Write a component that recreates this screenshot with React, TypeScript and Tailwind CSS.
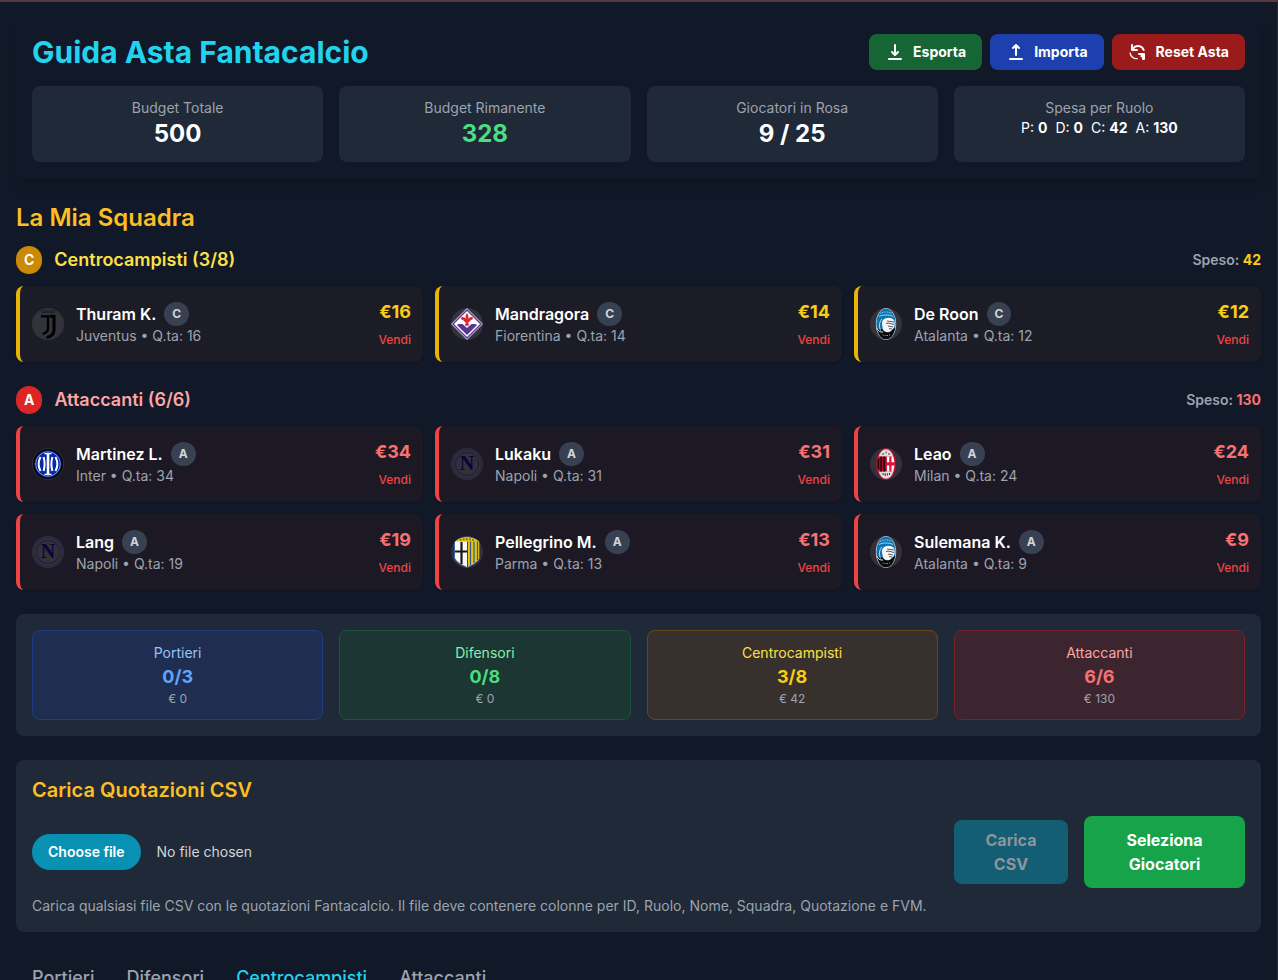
import React from "react";

type Team = "Juventus" | "Fiorentina" | "Atalanta" | "Inter" | "Napoli" | "Milan" | "Parma";
type Player = { name: string; team: Team; price: number };

const midfielders: Player[] = [
  { name: "Thuram K.", team: "Juventus", price: 16 },
  { name: "Mandragora", team: "Fiorentina", price: 14 },
  { name: "De Roon", team: "Atalanta", price: 12 },
];

const forwards: Player[] = [
  { name: "Martinez L.", team: "Inter", price: 34 },
  { name: "Lukaku", team: "Napoli", price: 31 },
  { name: "Leao", team: "Milan", price: 24 },
  { name: "Lang", team: "Napoli", price: 19 },
  { name: "Pellegrino M.", team: "Parma", price: 13 },
  { name: "Sulemana K.", team: "Atalanta", price: 9 },
];

function CrestArt({ team }: { team: Team }) {
  switch (team) {
    case "Juventus":
      return (
        <g>
          <path d="M9 2.800h2M12 2.800h1.500M14.500 2.800h2M17.500 2.800h1.500M20 2.800h3M9.500 4.200h13" stroke="#15151a" strokeWidth=".9" />
          <path d="M8.800 8.300H16v12.200c0 2.800-1.500 4.300-5.300 5.300" fill="none" stroke="#000" strokeWidth="2.300" />
          <path d="M17.500 8.300h4.500V22c0 4-2.700 6.500-7.500 7.500" fill="none" stroke="#000" strokeWidth="3" />
        </g>
      );
    case "Fiorentina":
      return (
        <g>
          <path d="M16 0 32 16 16 32 0 16Z" fill="#b9b2c6" />
          <path d="M16 1.300 30.700 16 16 30.700 1.300 16Z" fill="#5b3596" />
          <path d="M16 3 29 16 16 29 3 16Z" fill="#fff" />
          <path d="M7.500 16h4L16 20l4.500-4h4l1.500 1L16 27 6 17Z" fill="#5b3596" />
          <path d="M16 5c1.800 2.300 1.700 4.200.9 6.500.6-2.500 4.900-3.600 5-.9 0 1.400-1.500 1.700-2.100 1 0 1.700-1.200 2.300-2.500 2.400l.6 3.800h-3.800l.6-3.800c-1.300-.1-2.500-.7-2.500-2.400-.6.700-2.100.4-2.100-1 .1-2.700 4.400-1.600 5 .9-.8-2.300-.9-4.200.9-6.500Z" fill="#e12424" />
        </g>
      );
    case "Atalanta":
      return (
        <g>
          <ellipse cx="16" cy="16" rx="10.200" ry="16" fill="#b9c3c9" />
          <ellipse cx="16" cy="16" rx="9.500" ry="15.300" fill="#0874b5" />
          <path d="M7 20c4 2 14 2 18 0-1 6-4 11.300-9 11.300S8 26 7 20Z" fill="#08090b" />
          <path d="M9 8.500c4-2 10-2 14 0" fill="none" stroke="#d6e7ef" strokeWidth=".8" />
          <path d="M10 5.500c4-2 8-2 12 0" fill="none" stroke="#7fb9da" strokeWidth="1.200" strokeDasharray="1.200 .6" />
          <path d="M13 12c3-3 8-3 11 0 1.300 4 .8 7-1 9-2 1.800-3 3.500-5.500 3.200-3 .2-5-2-5-5.200-.6-3-1-5 .5-7Z" fill="#f6f6f6" />
          <path d="M12 11c-3 3-3 8-1.500 11.500" fill="none" stroke="#dbe9f0" strokeWidth=".9" />
          <path d="M7 20c1 3 3 4.500 6 4" fill="none" stroke="#e8eef0" strokeWidth="1" />
          <path d="m17 13 7 1M16 15.500c3-1 5 .5 8 1M18 18l5 1M19 20.500l3 .5" fill="none" stroke="#303136" strokeWidth=".8" />
          <path d="M12.500 27h1M14.500 27.500h1M16.500 27.500H18M19 27h1" stroke="#999" strokeWidth="1.200" />
        </g>
      );
    case "Inter":
      return (
        <g>
          <circle cx="16" cy="16" r="15.700" fill="#030408" stroke="#4a4a50" strokeWidth=".6" />
          <circle cx="16" cy="16" r="13.400" fill="#0829a6" />
          <circle cx="16" cy="16" r="12.300" fill="none" stroke="#c9d2f2" strokeWidth=".6" />
          <g fill="none" stroke="#fff">
            <path d="M16 6v20" strokeWidth="2.600" />
            <path d="M12.500 5.600h7M12.500 26.400h7" strokeWidth="1.400" />
            <path d="M11.600 9c1.300 4.500 1.300 9.500 0 14M20.400 9c-1.300 4.500-1.300 9.500 0 14" strokeWidth="2" />
            <path d="M8.500 9c-2.400 4.500-2.400 9.500 0 14M23.500 9c2.400 4.500 2.400 9.500 0 14" strokeWidth="2" />
          </g>
        </g>
      );
    case "Napoli":
      return (
        <g>
          <circle cx="16" cy="16" r="14.700" fill="none" stroke="#202049" strokeWidth=".9" />
          <circle cx="16" cy="16" r="11.700" fill="none" stroke="#17173f" strokeWidth=".9" />
          <text x="16" y="22.400" textAnchor="middle" fontFamily="Liberation Serif, serif" fontWeight="700" fontSize="20" fill="#05053b">
            N
          </text>
        </g>
      );
    case "Milan":
      return (
        <g>
          <ellipse cx="16" cy="16" rx="10" ry="16" fill="#b0102a" />
          <ellipse cx="16" cy="16" rx="8.700" ry="14.700" fill="#dcdcdc" />
          <path d="M8.500 8.500H16v15H8.500c-1.900-4-1.900-11 0-15Z" fill="#b0082a" />
          <path d="M8.300 11v10M11.200 8.500v15M14.200 8.500v15" stroke="#1a0c12" strokeWidth="1.600" />
          <path d="M16 8.500h7.500c1.900 4 1.900 11 0 15H16Z" fill="#df1234" />
          <path d="M17 8.500h2.300v5.800H17zM21.500 8.500h1.800l1 5.800h-2.800zM17 17.500h2.300v6H17zM21.500 17.500h2.800l-1 6h-1.800z" fill="#fff" />
          <path d="M12 6h2M15.200 4.500h1.600M18 6h2" stroke="#777" strokeWidth="1.400" />
          <path d="M12.500 26h1M14.500 26.500H16M17 26.500h1M19 26h1" stroke="#333" strokeWidth="2" />
        </g>
      );
    case "Parma":
      return (
        <g>
          <path d="M3 5C10-1 22-1 29 5v17c-2 5-7 7-13 10C10 29 5 27 3 22Z" fill="#3d63a8" />
          <path d="M4 5.500C11 0 21 0 28 5.500V22c-2 4-6 6-12 9C10 28 6 26 4 22Z" fill="#f8f8f6" />
          <path d="M16.500 5H28v17c-2 4-6 6-11.500 9Z" fill="#e8c70b" />
          <path d="M19.500 5v24.500M23 5v22M26.500 5v19" stroke="#3a5a94" strokeWidth="1.300" />
          <path d="M16.500 5v26" stroke="#234a95" strokeWidth="1" />
          <path d="M10.500 6v22M4 15.500h12" stroke="#171719" strokeWidth="2.200" />
          <path d="M4 5.500C11 0 21 0 28 5.500Z" fill="#e2bf11" />
          <path d="M9 3.800h1.500M12 3.300h1.500M15 3.200h1.500M18 3.300h1.500M21 3.800h1.500" stroke="#7d691c" strokeWidth="1.800" />
        </g>
      );
  }
}

function Crest({ team }: { team: Team }) {
  return (
    <span className="mr-3 block size-8 shrink-0 overflow-hidden rounded-full bg-white/10">
      <svg viewBox="0 0 32 32" className="size-8" aria-hidden="true">
        <CrestArt team={team} />
      </svg>
    </span>
  );
}

function PlayerCard({ player, role }: { player: Player; role: "C" | "A" }) {
  const mid = role === "C";
  return (
    <div
      className={`flex items-center justify-between rounded-lg border-l-4 p-3 shadow-sm ${
        mid ? "border-[#eab308] bg-[#1c1c26]" : "border-[#ef4444] bg-[#1c1924]"
      }`}
    >
      <div className="flex items-center">
        <Crest team={player.team} />
        <div>
          <div className="flex items-center">
            <span className="font-semibold text-white">{player.name}</span>
            <span className="ml-2 rounded-full bg-[#374151] px-2 py-1 text-xs font-bold text-[#d1d5db]">{role}</span>
          </div>
          <div className="text-sm text-[#9ca3af]">
            {player.team} • Q.ta: {player.price}
          </div>
        </div>
      </div>
      <div className="text-right">
        <div className={`text-lg font-bold ${mid ? "text-[#facc15]" : "text-[#f87171]"}`}>€{player.price}</div>
        <button className="text-xs font-medium text-[#ef4444]">Vendi</button>
      </div>
    </div>
  );
}

function Squad({ role, title, spent, players }: { role: "C" | "A"; title: string; spent: number; players: Player[] }) {
  const mid = role === "C";
  return (
    <section>
      <div className="mb-3 flex items-center justify-between">
        <h3 className={`flex items-center text-lg font-semibold ${mid ? "text-[#fde047]" : "text-[#fca5a5]"}`}>
          <span className={`mr-3 rounded-full px-2 py-1 text-sm font-bold text-white ${mid ? "bg-[#ca8a04]" : "bg-[#dc2626]"}`}>
            {role}
          </span>
          {title}
        </h3>
        <div className="text-sm font-semibold text-[#9ca3af]">
          Speso: <span className={`font-bold ${mid ? "text-[#facc15]" : "text-[#f87171]"}`}>{spent}</span>
        </div>
      </div>
      <div className="grid grid-cols-3 gap-3">
        {players.map((p) => (
          <PlayerCard key={p.name} player={p} role={role} />
        ))}
      </div>
    </section>
  );
}

const roleTotals = [
  { label: "Portieri", count: "0/3", spent: 0, box: "border-[#1e3d86] bg-[#1f2e50]", title: "text-[#93c5fd]", value: "text-[#60a5fa]" },
  { label: "Difensori", count: "0/8", spent: 0, box: "border-[#1b5539] bg-[#1c3634]", title: "text-[#86efac]", value: "text-[#4ade80]" },
  { label: "Centrocampisti", count: "3/8", spent: 42, box: "border-[#664718] bg-[#38302c]", title: "text-[#fde047]", value: "text-[#facc15]" },
  { label: "Attaccanti", count: "6/6", spent: 130, box: "border-[#74232b] bg-[#3c252f]", title: "text-[#fca5a5]", value: "text-[#f87171]" },
];

const actions = [
  {
    label: "Esporta",
    color: "bg-[#166534]",
    icon: (
      <path d="M3 17a1 1 0 011-1h12a1 1 0 110 2H4a1 1 0 01-1-1zm3.293-7.707a1 1 0 011.414 0L9 10.586V3a1 1 0 112 0v7.586l1.293-1.293a1 1 0 111.414 1.414l-3 3a1 1 0 01-1.414 0l-3-3a1 1 0 010-1.414z" />
    ),
  },
  {
    label: "Importa",
    color: "bg-[#1e40af]",
    icon: (
      <path d="M3 17a1 1 0 011-1h12a1 1 0 110 2H4a1 1 0 01-1-1zM6.293 6.707a1 1 0 010-1.414l3-3a1 1 0 011.414 0l3 3a1 1 0 01-1.414 1.414L11 5.414V13a1 1 0 11-2 0V5.414L7.707 6.707a1 1 0 01-1.414 0z" />
    ),
  },
  {
    label: "Reset Asta",
    color: "bg-[#991b1b]",
    icon: (
      <>
        <path d="M4 2a1 1 0 011 1v2.101a7.002 7.002 0 0111.601 2.566 1 1 0 11-1.885.666A5.002 5.002 0 005.999 7H9a1 1 0 010 2H4a1 1 0 01-1-1V3a1 1 0 011-1z" />
        <path d="M2 10.600C2.500 14.500 5.500 17.200 9.700 16.600" fill="none" stroke="currentColor" strokeWidth="1.300" />
        <path d="M11 11.100h5a1 1 0 011 1V17a1 1 0 01-1 1h-1a1 1 0 01-1-1v-1.500l-2-1.200 1.200-1.300H11a.95.95 0 010-1.900z" />
      </>
    ),
  },
];

function Stat({ label, children }: { label: string; children: React.ReactNode }) {
  return (
    <div className="rounded-lg bg-[#1f2937] p-3 text-center">
      <div className="text-sm text-[#9ca3af]">{label}</div>
      {children}
    </div>
  );
}

export default function App() {
  return (
    <div className="h-[980px] overflow-hidden border-t-2 border-r border-t-[#57393f] border-r-[#292b35] bg-[#111827] font-['Inter',sans-serif] text-[#e5e7eb]">
      <div className="p-4">
        <header className="mb-6 rounded-lg bg-[#111827] p-4 shadow-lg">
          <div className="mb-4 flex items-center justify-between">
            <h1 className="text-3xl/9 font-bold text-[#22d3ee]">Guida Asta Fantacalcio</h1>
            <div className="flex gap-2">
              {actions.map((a) => (
                <button key={a.label} className={`flex items-center rounded-lg px-4 py-2 text-sm font-bold text-white ${a.color}`}>
                  <svg viewBox="0 0 20 20" fill="currentColor" className="mr-2 size-5" aria-hidden="true">
                    {a.icon}
                  </svg>
                  {a.label}
                </button>
              ))}
            </div>
          </div>
          <div className="grid grid-cols-4 gap-4">
            <Stat label="Budget Totale">
              <div className="text-2xl font-bold text-white">500</div>
            </Stat>
            <Stat label="Budget Rimanente">
              <div className="text-2xl font-bold text-[#4ade80]">328</div>
            </Stat>
            <Stat label="Giocatori in Rosa">
              <div className="text-2xl font-bold text-white">9 / 25</div>
            </Stat>
            <Stat label="Spesa per Ruolo">
              <div className="flex justify-center gap-2 text-sm text-white">
                <span>P: <b>0</b></span>
                <span>D: <b>0</b></span>
                <span>C: <b>42</b></span>
                <span>A: <b>130</b></span>
              </div>
            </Stat>
          </div>
        </header>

        <h2 className="mb-3 text-2xl font-semibold text-[#fbbf24]">La Mia Squadra</h2>
        <div className="mb-6 flex flex-col gap-6">
          <Squad role="C" title="Centrocampisti (3/8)" spent={42} players={midfielders} />
          <Squad role="A" title="Attaccanti (6/6)" spent={130} players={forwards} />
        </div>

        <section className="mb-6 grid grid-cols-4 gap-4 rounded-lg bg-[#1f2937] p-4">
          {roleTotals.map((r) => (
            <div key={r.label} className={`rounded-lg border p-3 text-center ${r.box}`}>
              <div className={`text-sm ${r.title}`}>{r.label}</div>
              <div className={`text-lg font-bold ${r.value}`}>{r.count}</div>
              <div className="text-xs text-[#9ca3af]">€ {r.spent}</div>
            </div>
          ))}
        </section>

        <section className="mb-6 rounded-lg bg-[#1f2937] p-4">
          <h2 className="mb-3 text-xl font-semibold text-[#fbbf24]">Carica Quotazioni CSV</h2>
          <div className="flex items-center gap-4">
            <div className="flex flex-1 items-center text-sm text-[#d1d5db]">
              <button className="mr-4 rounded-full bg-[#0891b2] px-4 py-2 font-semibold text-white">Choose file</button>
              No file chosen
            </div>
            <button className="w-[114px] rounded-lg bg-[#135d75] px-6 py-2 font-bold text-[#8f949b]">Carica CSV</button>
            <button className="w-[161px] rounded-lg bg-[#16a34a] px-8 py-3 font-bold text-white">Seleziona Giocatori</button>
          </div>
          <p className="mt-2 text-sm text-[#9ca3af]">
            Carica qualsiasi file CSV con le quotazioni Fantacalcio. Il file deve contenere colonne per ID, Ruolo, Nome, Squadra, Quotazione e FVM.
          </p>
        </section>

        <nav className="flex text-lg font-medium text-[#9ca3af]">
          <button className="px-4 py-2">Portieri</button>
          <button className="px-4 py-2">Difensori</button>
          <button className="px-4 py-2 text-[#22d3ee]">Centrocampisti</button>
          <button className="px-4 py-2">Attaccanti</button>
        </nav>
      </div>
    </div>
  );
}
